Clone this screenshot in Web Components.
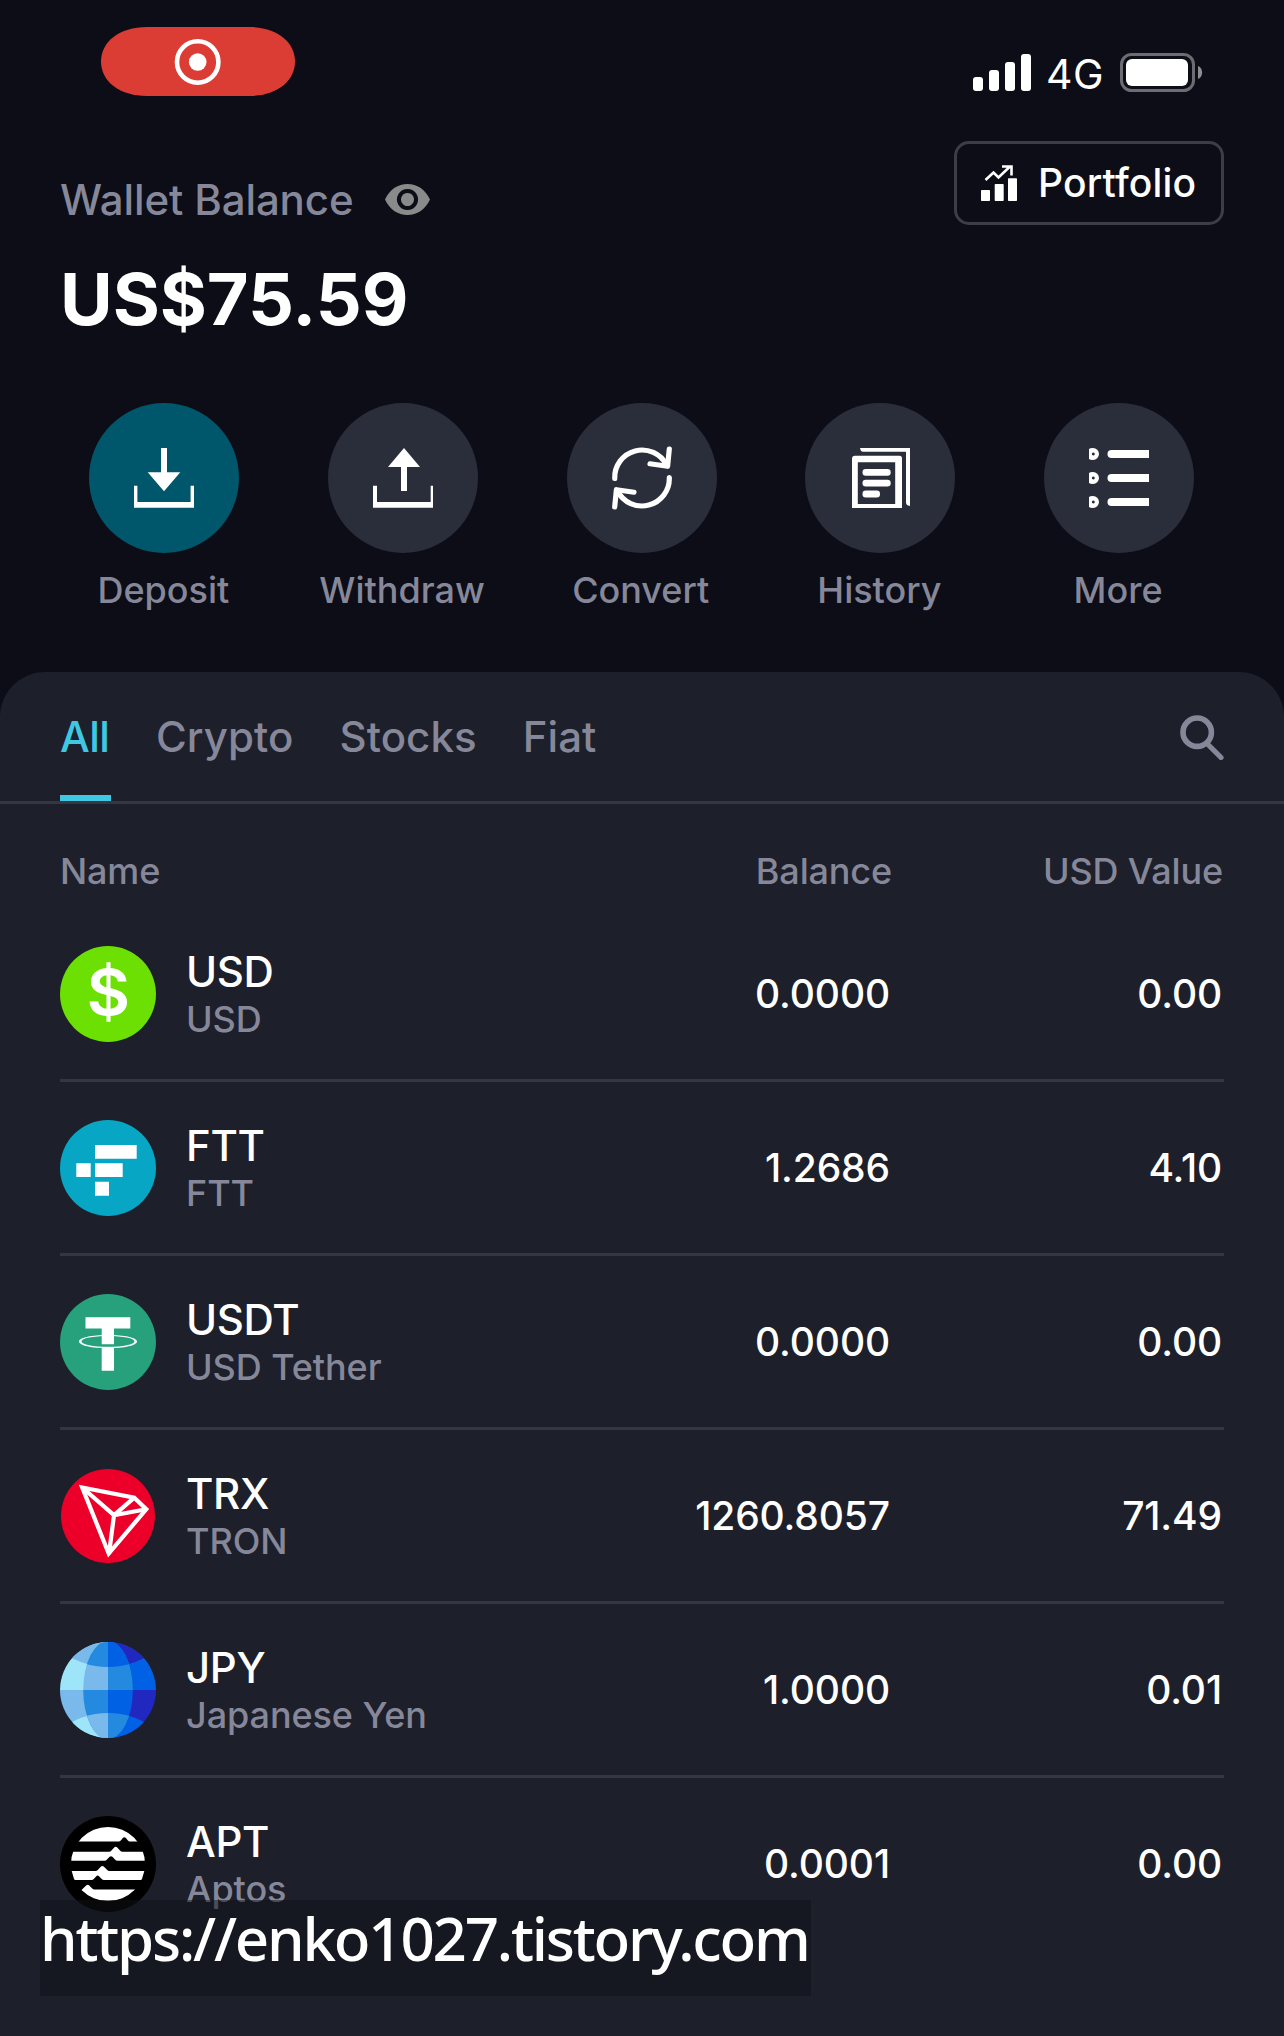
<!DOCTYPE html>
<html lang="en">
<head>
<meta charset="utf-8">
<title>Wallet</title>
<style>
html,body{margin:0;padding:0;background:#0c0d17}
body{width:1284px;height:2036px;overflow:hidden;font-family:Inter,"Liberation Sans",sans-serif;font-weight:500;color:#fff}
</style>
</head>
<body>
<wallet-app></wallet-app>
<script>
const define = (name, html) => customElements.define(name, class extends HTMLElement {
  connectedCallback() {
    if (this.shadowRoot) return;
    const attr = (_, key) => this.getAttribute(key) || '';
    this.attachShadow({ mode: 'open' }).innerHTML =
      (typeof html === 'function' ? html(this) : html).replace(/\{\{([\w-]+)\}\}/g, attr);
  }
});

const ACTION_ICONS = {
  deposit: '<path d="M72 45h6v24.3h13.3L75 88.3 58.7 69.3H72z"/><path d="M45 82.7h3.4v16.4h53.2V82.7h3.4v22H45z"/>',
  withdraw: '<path d="M76 45l16 19H79v24h-6V64H60z"/><path d="M45 82.7h4v16.4h53.7V82.7h2.3v22H45z"/>',
  convert: '<g fill="none" stroke="#fff" stroke-width="5.2" stroke-linecap="round" stroke-linejoin="round"><path d="M47.7 75.500A27.400 27.400 0 0 1 99.500 62"/><path d="M102.300 46L100.600 63.300 83 60.800"/><path d="M102.300 74.500A27.400 27.400 0 0 1 50.500 88"/><path d="M47.700 104L49.400 86.700 67 89.200"/></g>',
  history: '<path fill-rule="evenodd" d="M50 52.700H94.500Q97 52.700 97 55.200V105H47V55.700Q47 52.700 50 52.700ZM52.800 59.300V100.900H90.200V59.300Z"/><path d="M55 45H105V103Q101 102.500 101 99.500V48.700H58Q55.500 48.700 55 45Z"/><rect x="57.500" y="66" width="28.200" height="6.800" rx="3.200"/><rect x="57.500" y="76.700" width="28.200" height="6.800" rx="3.200"/><rect x="57.500" y="87.600" width="17.500" height="6.800" rx="3.200"/>',
  more: [51, 75, 99].map(y => `<path fill-rule="evenodd" d="M45 ${y - 5}Q46 ${y - 6} 49 ${y - 6}A6 6 0 0 1 49 ${y + 6}Q46 ${y + 6} 45 ${y + 5}ZM49.300 ${y - 1.5}a1.500 1.500 0 1 0 .01 0Z"/><path d="M105 ${y - 4}v8H67.500a4 4 0 0 1 0-8Z"/>`).join('')
};

const COIN_ICONS = {
  USD: '<circle cx="48" cy="48" r="48" fill="#6ce003"/><text transform="translate(48.300 69) scale(1.1 1.03)" text-anchor="middle" font-family="Inter" font-weight="600" font-size="61" fill="#fff">$</text>',
  FTT: '<circle cx="48" cy="48" r="48" fill="#06a6c4"/><path fill="#fff" d="M35 25h41.700v13.800H35zM16.300 43.300h14.400v13.800H16.300zM35 43.300h27.700v13.800H35zM35 61.700h14v14H35z"/>',
  USDT: '<circle cx="48" cy="48" r="48" fill="#26a17b"/><path fill="#fff" fill-rule="evenodd" d="M19 47.500C19 43.500 32 41 48 41S77 43.500 77 47.500 64 54.200 48 54.200 19 51.500 19 47.500ZM21.500 47.400C21.500 50.400 33 52.700 48 52.700S74.500 50.400 74.500 47.400 63 42.100 48 42.100 21.500 44.400 21.500 47.400Z"/><path fill="#fff" d="M25.500 23.300h44.800v11.200H54V50.200H41.700V34.500H25.500zM41.700 53h12.300v23.700H41.700z"/>',
  TRX: '<rect x="1" y="1" width="94" height="94" rx="47" fill="#ec0029"/><g fill="none" stroke="#fff" stroke-width="4.200" stroke-linejoin="miter"><path d="M22.200 19.500L74.300 29.700 86.300 41.200 48.700 85.500Z"/><path d="M22.200 19.500L54 47.200 74.300 29.700M54 47.200L86.300 41.200M54 47.200L49 86"/></g>',
  JPY: '<defs><clipPath id="all"><circle cx="48" cy="48" r="48"/></clipPath><clipPath id="lens"><ellipse cx="48" cy="48" rx="24.800" ry="49"/></clipPath></defs>'
    + '<g clip-path="url(#all)">'
    + '<path fill="#9fe5fa" d="M0 0h48v48H0z"/><path fill="#0061e5" d="M48 0h48v48H48z"/><path fill="#79b9eb" d="M0 48h48v48H0z"/><path fill="#2028c0" d="M48 48h48v48H48z"/>'
    + '<path fill="#79b9eb" d="M0 0H48V25Q29 25 12.300 16.300L0 8Z"/><path fill="#2028c0" d="M96 0H48V25Q67 25 83.700 16.300L96 8Z"/>'
    + '<path fill="#9fe5fa" d="M0 96H48V71Q29 71 12.300 79.700L0 88Z"/><path fill="#0061e5" d="M96 96H48V71Q67 71 83.700 79.700L96 88Z"/>'
    + '<g clip-path="url(#lens)"><path fill="#79b9eb" d="M0 0h48v48H0z"/><path fill="#238ae0" d="M48 0h48v48H48z"/><path fill="#238ae0" d="M0 48h48v48H0z"/><path fill="#0061e5" d="M48 48h48v48H48z"/>'
    + '<path fill="#238ae0" d="M0 0H48V25Q29 25 12.300 16.300L0 8Z"/><path fill="#0061e5" d="M96 0H48V25Q67 25 83.700 16.300L96 8Z"/>'
    + '<path fill="#79b9eb" d="M0 96H48V71Q29 71 12.300 79.700L0 88Z"/><path fill="#238ae0" d="M96 96H48V71Q67 71 83.700 79.700L96 88Z"/></g></g>',
  APT: '<circle cx="48" cy="48" r="48" fill="#000"/><circle cx="48" cy="48" r="37" fill="#fff"/><path fill="#000" d="M8 25.500H58.500Q60 25.500 61 24.300L63 21.800Q64.300 20.600 65.700 21.800L67.700 24.300Q68.700 25.500 70 25.500H88V35.700H62.500Q61 35.700 60 34.500L57 31.300Q55.700 30.200 54.400 31.300L51.500 34.500Q50.500 35.700 49 35.700H8Z"/><path fill="#000" d="M8 44.800H44.500Q46 44.800 47 43.500L49.600 40.800Q51 39.600 52.400 40.800L55 43.500Q56 44.800 57.500 44.800H88V55H49.500Q48 55 47 53.800L43.700 50.500Q42.300 49.400 41 50.500L38 53.800Q37 55 35.500 55H8Z"/><path fill="#000" d="M8 64H31.500Q33 64 34 62.800L36.300 60.200Q37.700 59 39 60.200L41.500 62.800Q42.500 64 44 64H88V73.500H34.500Q33 73.500 32 72.300L29 69.300Q27.700 68.200 26.400 69.300L21.500 74H8Z"/>'
};

define('status-bar', `
<style>
:host{display:flex;justify-content:space-between;align-items:flex-start;height:114px;padding:27px 81px 0 101px;box-sizing:border-box}
svg{display:block}
.rec{width:194px;height:69px}
.right{display:flex;align-items:flex-start;padding-top:17px}
.net{font-size:41px;font-weight:400;line-height:50px;width:72px;margin-top:5px;padding-left:15px;box-sizing:border-box;white-space:nowrap;letter-spacing:.5px}
.bars{margin-top:10px}
.batt{margin:9px 0 0 17px}
</style>
<svg class="rec" viewBox="0 0 194 69"><path fill="#db3c34" d="M46 0H148C176 0 194 15 194 34.500S176 69 148 69H46C18 69 0 54 0 34.500S18 0 46 0Z"/><circle cx="96.700" cy="35" r="20.700" fill="none" stroke="#fff" stroke-width="4.600"/><circle cx="96.700" cy="35" r="8.800" fill="#fff"/></svg>
<div class="right">
<svg class="bars" width="58" height="37" viewBox="0 0 58 37" fill="#fff"><rect y="23" width="10" height="14" rx="3"/><rect x="16" y="16" width="10" height="21" rx="3"/><rect x="32" y="8" width="10" height="29" rx="3"/><rect x="48" width="10" height="37" rx="3"/></svg>
<span class="net">4G</span>
<svg class="batt" width="83" height="39" viewBox="0 0 83 39"><rect x="1.500" y="1.500" width="72" height="36" rx="10" fill="none" stroke="#6c6c72" stroke-width="3"/><rect x="6" y="6" width="62" height="27" rx="6" fill="#fff"/><path d="M78 13c5.500 2 5.500 11 0 13z" fill="#8d8d92"/></svg>
</div>`);

define('portfolio-button', `
<style>
:host{display:flex;align-items:center;box-sizing:border-box;width:270px;height:84px;border:3px solid #3d3d48;border-radius:15px;padding-left:24px;gap:21px;font-size:39px;letter-spacing:.15px;line-height:48px}
</style>
<svg width="36" height="36" viewBox="0 0 36 36" fill="#fff"><rect y="25" width="9" height="11" rx=".8"/><rect x="13.700" y="19" width="9" height="17" rx=".8"/><rect x="27" y="13.300" width="9" height="22.700" rx=".8"/><path d="M4.500 15L12.500 7.500 17.500 12.500 29 1.500M21 1.500H30.500V10.500" fill="none" stroke="#fff" stroke-width="2.600"/></svg>
<slot></slot>`);

define('wallet-balance', `
<style>
:host{display:flex;justify-content:space-between;align-items:flex-start;padding:27px 60px 0}
.top{display:flex;align-items:center;height:50px;margin-top:34px;font-size:42px;letter-spacing:-.12px;line-height:50px;color:#86889a}
.top svg{margin:0 0 2px 32px}
.sum{font-size:72px;font-weight:700;line-height:86px;margin-top:31px;letter-spacing:-.05px}
</style>
<div><div class="top">{{label}}<svg width="45" height="31" viewBox="0 0 45 31"><path fill="#8a8a8a" fill-rule="evenodd" d="M0 15.500C5 5 13 0 22.500 0S40 5 45 15.500C40 26 32 31 22.500 31S5 26 0 15.500ZM22.500 4.900a10.600 10.600 0 1 0 .01 0ZM22.500 9a6.500 6.500 0 1 1-.01 0Z"/></svg></div>
<div class="sum">{{amount}}</div></div>
<portfolio-button>Portfolio</portfolio-button>`);

define('wallet-action', el => `
<style>
:host{display:flex;flex-direction:column;align-items:center;flex:1 1 0;min-width:0;font-size:36px;line-height:44px;color:#86889a}
.disc{width:150px;height:150px;margin-bottom:15px;display:block}
.label{margin-right:2px}
</style>
<svg class="disc" viewBox="0 0 150 150" fill="#fff"><circle cx="75" cy="75" r="75" fill="${el.hasAttribute('primary') ? '#00566a' : '#2a2e3a'}"/>${ACTION_ICONS[el.getAttribute('icon')]}</svg>
<span class="label"><slot></slot></span>`);

define('tab-item', `
<style>
:host{display:block;height:129px;box-sizing:border-box;padding-top:40px;font-size:42px;line-height:50px;color:#86889a;letter-spacing:.07px}
:host([active]){color:#3fc8e4;border-bottom:6px solid #3fc8e4;letter-spacing:-.5px;width:51px;margin-right:-1px;white-space:nowrap}
</style><slot></slot>`);

define('asset-tabs', `
<style>
:host{display:flex;height:129px;padding:0 60px;border-bottom:3px solid #353641;gap:46px}
svg{margin:43px 0 0 auto;display:block}
</style>
<tab-item active>All</tab-item><tab-item>Crypto</tab-item><tab-item>Stocks</tab-item><tab-item>Fiat</tab-item>
<svg width="45" height="45" viewBox="0 0 45 45" fill="none" stroke="#86889a"><circle cx="18.200" cy="17.200" r="14.200" stroke-width="5.600"/><path d="M30 30.500L42 42.500" stroke-width="5.200" stroke-linecap="round"/></svg>`);

define('asset-head', `
<style>
:host{display:grid;grid-template-columns:1fr 400px 332px;padding:45px 60px 15px;font-size:36px;line-height:44px;color:#86889a;letter-spacing:-.15px}
span+span{text-align:right}
span:last-child{padding-right:1px}
</style><span>Name</span><span>Balance</span><span>USD Value</span>`);

define('asset-row', el => `
<style>
:host{display:grid;grid-template-columns:126px 1fr 400px 333px;align-items:center;box-sizing:border-box;height:174px;margin:0 60px;border-bottom:3px solid #353641}
:host(:last-of-type){border-bottom-color:transparent}
svg{display:block}
.t{font-size:42px;line-height:50px;letter-spacing:-.3px}
.s{font-size:36px;line-height:44px;color:#86889a;letter-spacing:-.08px}
.v{font-size:39px;line-height:48px;text-align:right;letter-spacing:-.12px;padding-right:1px}
.v:last-child{padding-right:2px}
</style>
<svg width="96" height="96" viewBox="0 0 96 96">${COIN_ICONS[el.getAttribute('symbol')]}</svg>
<div><div class="t">{{symbol}}</div><div class="s">{{name}}</div></div>
<div class="v">{{balance}}</div><div class="v">{{value}}</div>`);

define('source-link', `
<style>
:host{display:block;position:absolute;left:40px;top:1900px;width:771px;height:96px;background:rgba(14,18,22,.5);font:500 60px/76px "Noto Sans","Open Sans",sans-serif;letter-spacing:-2.200px;white-space:nowrap;color:#fff}
</style><slot></slot>`);

define('wallet-app', `
<style>
:host{display:flex;flex-direction:column;height:2036px}
.actions{display:flex;padding:61px 45.600px 0 45px}
.sheet{margin-top:60px;flex:1;background:#1d1f2a;border-radius:45px 45px 0 0}
</style>
<status-bar></status-bar>
<wallet-balance label="Wallet Balance" amount="US$75.59"></wallet-balance>
<div class="actions">
<wallet-action icon="deposit" primary>Deposit</wallet-action><wallet-action icon="withdraw">Withdraw</wallet-action><wallet-action icon="convert">Convert</wallet-action><wallet-action icon="history">History</wallet-action><wallet-action icon="more">More</wallet-action>
</div>
<div class="sheet">
<asset-tabs></asset-tabs>
<asset-head></asset-head>
<asset-row symbol="USD" name="USD" balance="0.0000" value="0.00"></asset-row>
<asset-row symbol="FTT" name="FTT" balance="1.2686" value="4.10"></asset-row>
<asset-row symbol="USDT" name="USD Tether" balance="0.0000" value="0.00"></asset-row>
<asset-row symbol="TRX" name="TRON" balance="1260.8057" value="71.49"></asset-row>
<asset-row symbol="JPY" name="Japanese Yen" balance="1.0000" value="0.01"></asset-row>
<asset-row symbol="APT" name="Aptos" balance="0.0001" value="0.00"></asset-row>
</div>
<source-link>https://enko1027.tistory.com</source-link>`);
</script>
</body>
</html>
